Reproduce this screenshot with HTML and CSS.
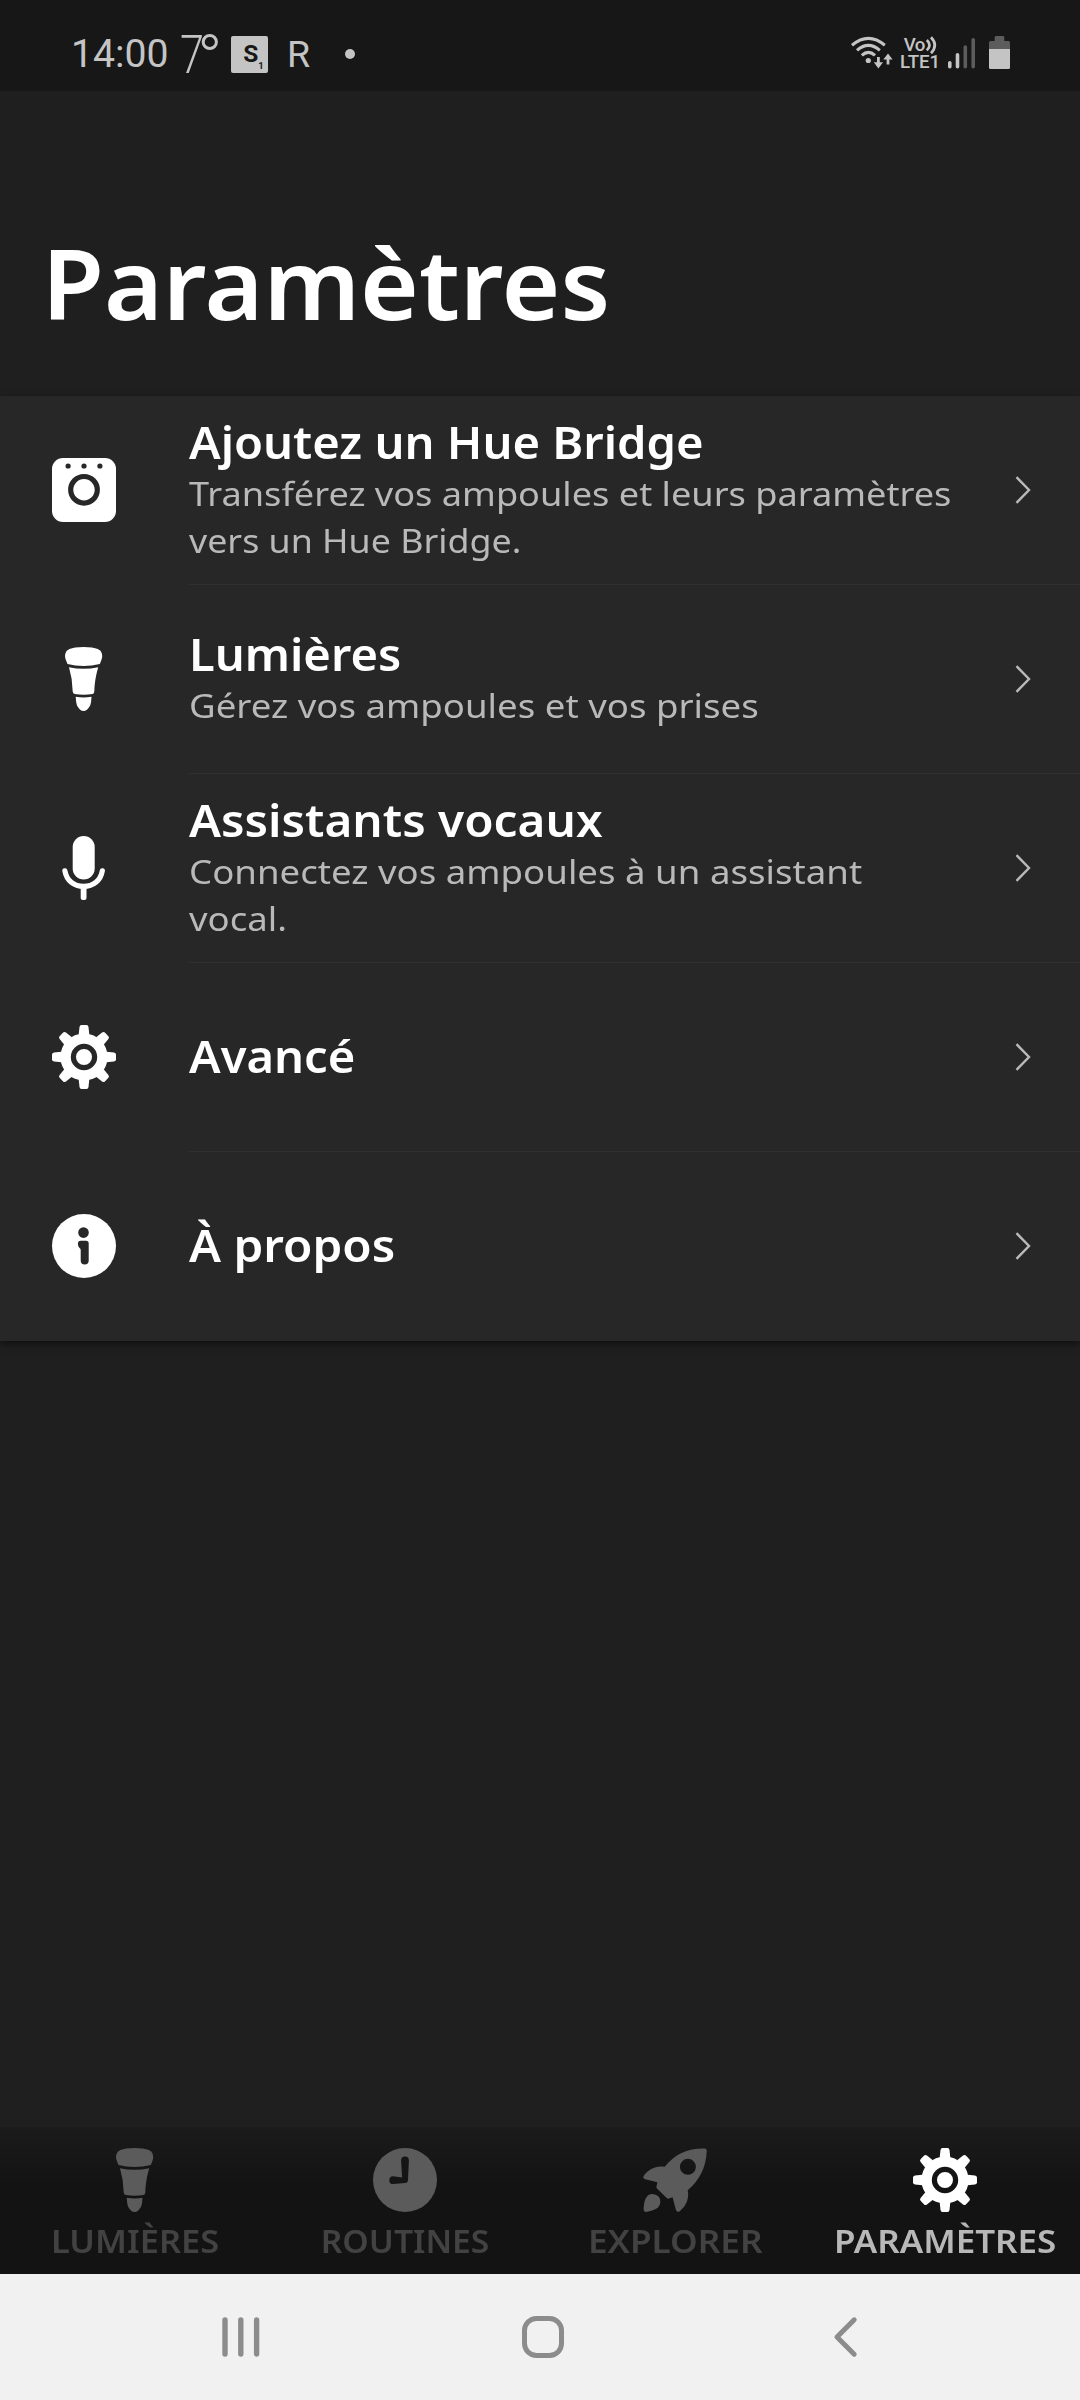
FILE: index.html
```html
<!DOCTYPE html>
<html lang="fr">
<head>
<meta charset="utf-8">
<title>Paramètres</title>
<link rel="stylesheet" href="styles.css">
</head>
<body>
<svg class="defs" aria-hidden="true">
  <symbol id="bulb" viewBox="0 0 64 64">
    <path d="M15.5 17Q13 11.5 13 9Q13 4 17.5 2Q22 0 31.6 0Q41 0 45.8 2Q50.2 4 50.2 9Q50.2 11.5 47.8 17Q40 18.9 31.6 18.9Q23 18.9 15.5 17Z"/>
    <path d="M17 20.3Q24 21.8 31.6 21.8Q39 21.8 46.2 20.3Q42.5 33 42.3 44.5Q42.2 46.5 40.5 47Q31.6 48.3 22.7 47Q21 46.5 20.7 44.5Q20.5 32 17 20.3Z"/>
    <path d="M23.7 49.8Q31.6 51 39.5 49.8Q39.4 55 38.2 58.5Q35 64 31.6 64Q28 64 25 58.5Q23.9 55 23.7 49.8Z"/>
  </symbol>
  <symbol id="gear" viewBox="-32 -32 64 64">
    <mask id="gear-ring" maskUnits="userSpaceOnUse" x="-32" y="-32" width="64" height="64">
      <rect x="-32" y="-32" width="64" height="64" fill="#fff"/>
      <circle r="10.6" fill="none" stroke="#000" stroke-width="5.2"/>
    </mask>
    <g mask="url(#gear-ring)">
      <circle r="23.6"/>
      <g id="teeth">
        <path id="tooth" d="M-4.5-30Q-4.2-32-2.5-32H2.5Q4.2-32 4.5-30L5.3-22.5H-5.3Z"/>
        <use href="#tooth" transform="rotate(45)"/>
        <use href="#tooth" transform="rotate(90)"/>
        <use href="#tooth" transform="rotate(135)"/>
      </g>
      <use href="#teeth" transform="rotate(180)"/>
    </g>
  </symbol>
  <symbol id="chevron" viewBox="0 0 16 28">
    <path d="M1.5 1.2L14 14L1.5 26.8" fill="none" stroke="currentColor" stroke-width="2.4"/>
  </symbol>
</svg>

<div class="statusbar">
  <span class="time">14:00</span>
  <svg class="weather" width="38" height="44" viewBox="0 0 38 44">
    <text class="weather-temp" transform="translate(0 41) scale(.8 1)">7</text>
    <circle cx="29.8" cy="10" r="6.6"/>
  </svg>
  <span class="tile"><b>S</b><small>1</small></span>
  <span class="roaming">R</span>
  <span class="dot"></span>
  <svg class="indicators" width="160" height="40" viewBox="850 34 160 40">
    <g fill="none" stroke="currentColor" stroke-width="3.1">
      <path d="M852 45.2Q868.4 31.4 884.8 45.2"/>
      <path d="M857 50.3Q868.4 40.4 879.8 50.3"/>
      <path d="M861.8 55.3Q868.4 49.3 875 55.3"/>
      <path d="M878.4 57V65M888 64.5V57" stroke-width="2.8"/>
      <path d="M926.8 40Q932.2 45.2 926.8 50.4M931 37.2Q938.6 45.2 931 53.2" stroke-width="2.7"/>
    </g>
    <circle cx="868.3" cy="60.5" r="2.6"/>
    <path d="M873.8 62.2H883L878.4 68.4ZM883.3 59.6H892.6L888 53.4Z"/>
    <text class="net" x="903.8" y="50.500" textLength="21.500">Vo</text>
    <text class="net" x="900" y="68.300" textLength="40">LTE1</text>
    <rect x="948" y="61" width="3.6" height="7.6" rx="1.8"/>
    <rect x="955.7" y="53" width="3.6" height="15.6" rx="1.8"/>
    <g fill="#5c5c5c">
      <rect x="963.5" y="45.3" width="3.6" height="23.3" rx="1.8"/>
      <rect x="971.4" y="38" width="3.6" height="30.6" rx="1.8"/>
      <path d="M996 36H1003Q1004.300 36 1004.300 37.300V41H1008.500Q1010 41 1010 42.500V49H989V42.500Q989 41 990.500 41H994.700V37.300Q994.700 36 996 36Z"/>
    </g>
    <path d="M989 49H1010V67.500Q1010 69 1008.500 69H990.500Q989 69 989 67.500Z"/>
  </svg>
</div>

<header class="header"><h1>Paramètres</h1></header>

<main class="list">
  <a class="row">
    <svg class="icon" viewBox="0 0 64 64">
      <rect width="64" height="64" rx="11"/>
      <g fill="#272727"><circle cx="16.100" cy="8" r="2.600"/><circle cx="32" cy="8" r="2.600"/><circle cx="47.900" cy="8" r="2.600"/></g>
      <circle cx="32" cy="31.800" r="13.300" fill="none" stroke="#272727" stroke-width="5.200"/>
    </svg>
    <div class="text">
      <h2>Ajoutez un Hue Bridge</h2>
      <p>Transférez vos ampoules et leurs paramètres</p>
      <p class="snug">vers un Hue Bridge.</p>
    </div>
    <svg class="chevron"><use href="#chevron"/></svg>
  </a>
  <a class="row">
    <svg class="icon"><use href="#bulb"/></svg>
    <div class="text">
      <h2>Lumières</h2>
      <p class="wide">Gérez vos ampoules et vos prises</p>
    </div>
    <svg class="chevron"><use href="#chevron"/></svg>
  </a>
  <a class="row">
    <svg class="icon" viewBox="0 0 64 64">
      <rect x="20.700" width="22" height="43.500" rx="11"/>
      <path d="M12.900 34.800C14.500 44.500 22 50.400 31.600 50.400S48.700 44.500 50.300 34.800" fill="none" stroke="currentColor" stroke-width="5.200" stroke-linecap="round"/>
      <path d="M28.700 50H34.500V62Q34.500 64 32.500 64H30.700Q28.700 64 28.700 62Z"/>
    </svg>
    <div class="text">
      <h2 class="wide">Assistants vocaux</h2>
      <p class="wide">Connectez vos ampoules à un assistant</p>
      <p class="wide">vocal.</p>
    </div>
    <svg class="chevron"><use href="#chevron"/></svg>
  </a>
  <a class="row">
    <svg class="icon"><use href="#gear"/></svg>
    <div class="text"><h2>Avancé</h2></div>
    <svg class="chevron"><use href="#chevron"/></svg>
  </a>
  <a class="row">
    <svg class="icon" viewBox="0 0 64 64">
      <circle cx="32" cy="32" r="32"/>
      <g fill="#272727">
        <circle cx="31.500" cy="18.600" r="5.300"/>
        <path d="M28.800 26.700H34Q36.700 26.700 36.700 29.400V46.500A4 4 0 0 1 28.700 46.500V36Q28.700 34.500 27.500 33.900Q25.900 32.800 25.900 30Q25.900 26.700 28.800 26.700Z"/>
      </g>
    </svg>
    <div class="text"><h2 class="wide">À propos</h2></div>
    <svg class="chevron"><use href="#chevron"/></svg>
  </a>
</main>

<nav class="tabs">
  <a class="tab">
    <svg class="icon"><use href="#bulb"/></svg>
    <span class="lumieres">LUMIÈRES</span>
  </a>
  <a class="tab">
    <svg class="icon" viewBox="0 0 64 64">
      <circle cx="32" cy="32" r="32"/>
      <path fill="#151515" d="M28.100 12.500A3.900 3.900 0 0 1 35.900 12.500L35 32Q34.800 34.800 32 35.100L20.200 36.100A3.900 3.900 0 0 1 20.200 28.300L29.100 29.400Z"/>
    </svg>
    <span class="routines">ROUTINES</span>
  </a>
  <a class="tab">
    <svg class="icon" viewBox="0 0 64 64">
      <path fill-rule="evenodd" d="M61.500.4Q63.900.3 63.700 3C63.200 19 56.500 32.500 44.700 42.300C46.500 50.500 43 58.500 36.700 63.200Q33.500 65 32.700 61.300L29.600 49.300L26 50.500Q24.600 51 23.500 49.700L14.200 40.700Q13.100 39.700 13.500 38.500L14.400 34.200L2.200 31.200Q-.8 30.300.9 27.500C6 20.800 13 17.200 21.700 18.800C32 5.800 44 .2 61.500.4ZM44.900 10.800A8 8 0 1 0 44.900 26.800A8 8 0 1 0 44.900 10.800Z"/>
      <path d="M.6 61.500Q1 46.200 9.300 46.100Q17.300 46.500 17.300 54Q17 62 3.200 63.900Q.6 64 .6 61.500Z"/>
    </svg>
    <span class="explorer">EXPLORER</span>
  </a>
  <a class="tab active">
    <svg class="icon"><use href="#gear"/></svg>
    <span class="parametres">PARAMÈTRES</span>
  </a>
</nav>

<div class="navbar">
  <svg width="40" height="42" viewBox="0 0 40 42"><path d="M5 4V38M20.800 4V38M36.600 4V38" stroke-width="5.400"/></svg>
  <svg width="42" height="42" viewBox="0 0 42 42"><rect x="2.500" y="2.500" width="37" height="37" rx="12"/></svg>
  <svg width="42" height="42" viewBox="0 0 42 42"><path d="M29.200 3.800L12 21L29.200 38.200" stroke-width="5"/></svg>
</div>
</body>
</html>
```
FILE: styles.css
```css
* { box-sizing: border-box; }

body {
  display: flex;
  flex-direction: column;
  width: 1080px;
  height: 2400px;
  margin: 0;
  background: #1f1f1f;
  color: #fff;
  font-family: "Noto Sans", sans-serif;
}

/* Headings and labels are slightly extended horizontally */
h1, h2, p { margin: 0; white-space: nowrap; transform-origin: 0 50%; }
svg { display: block; flex: none; fill: currentColor; }
.defs { position: absolute; width: 0; height: 0; }

/* Status bar */
.statusbar {
  display: flex;
  align-items: center;
  height: 91px;
  padding: 17px 70px 0 71px;
  background: #171717;
  color: #c4c4c4;
  font-family: Roboto, sans-serif;
}
.time { width: 109px; font-size: 39.2px; line-height: 40px; }
.weather { overflow: visible; }
.weather-temp { font-size: 54px; font-weight: 300; }
.weather circle { fill: none; stroke: currentColor; stroke-width: 3; }
.tile {
  display: flex;
  justify-content: center;
  width: 37px;
  height: 37px;
  margin-left: 13px;
  padding-left: 8px;
  border-radius: 2px;
  background: #c4c4c4;
  color: #171717;
  line-height: 35px;
}
.tile b { font-size: 24.5px; }
.tile small { padding-top: 12px; font-size: 9.5px; font-weight: 700; }
.roaming { width: 46px; margin-left: 19px; font-size: 37.5px; line-height: 40px; }
.dot { width: 10px; height: 10px; margin-left: 12px; border-radius: 50%; background: currentColor; }
.indicators { margin-left: auto; }
.net { font-size: 18.7px; font-weight: 500; }

/* Page title */
.header {
  display: flex;
  align-items: flex-end;
  height: 305px;
  padding: 0 42px 64px;
}
h1 { font-size: 97px; font-weight: 600; line-height: 100px; transform: scaleX(1.038); }

/* Settings list */
.list {
  background: #272727;
  box-shadow: 0 3px 7px rgba(0, 0, 0, .5);
}
.row { display: flex; align-items: center; height: 189px; padding-left: 52px; }
.icon { width: 64px; height: 64px; }
.row .icon { margin-bottom: 1px; }
.text {
  flex: 1;
  display: flex;
  flex-direction: column;
  justify-content: center;
  align-self: stretch;
  margin-left: 73px;
  padding-bottom: 3px;
  border-bottom: 1px solid #303030;
}
.row:last-child .text { border-color: transparent; }
h2 { font-size: 45px; font-weight: 600; line-height: 56px; transform: scaleX(1.047); }
h2.wide { transform: scaleX(1.06); }
.text p { color: #b9b9b9; font-size: 33.5px; line-height: 47px; transform: scaleX(1.079); }
.text p.snug { transform: scaleX(1.068); }
.text p.wide { transform: scaleX(1.093); }
.chevron {
  width: 65px;
  height: 100%;
  padding: 80px 49px 80px 0;
  border-bottom: 1px solid #303030;
  color: #b9b9b9;
}
.row:last-child .chevron { border-color: transparent; }

/* App tabs */
.tabs {
  display: grid;
  grid-template-columns: repeat(4, 1fr);
  height: 147px;
  margin-top: auto;
  background: linear-gradient(#1b1b1b, #131313 40%);
}
.tab {
  display: flex;
  flex-direction: column;
  align-items: center;
  gap: 9px;
  padding-top: 21px;
  color: #5b5b5b;
}
.tab span { color: #424242; font-size: 31.5px; font-weight: 600; line-height: 40px; }
.tab.active { color: #fff; }
.tab.active span { color: #b8b8b8; }
.lumieres { transform: scaleX(1.092); }
.routines { transform: scaleX(1.067); }
.explorer { transform: scaleX(1.116); }
.parametres { transform: scaleX(1.11); }

/* System navigation */
.navbar {
  display: flex;
  align-items: center;
  justify-content: space-between;
  height: 126px;
  padding: 0 213px 0 220px;
  background: #f1f1f1;
  color: #8c8c8c;
}
.navbar svg { fill: none; stroke: currentColor; stroke-width: 5; stroke-linecap: round; stroke-linejoin: round; }
```
